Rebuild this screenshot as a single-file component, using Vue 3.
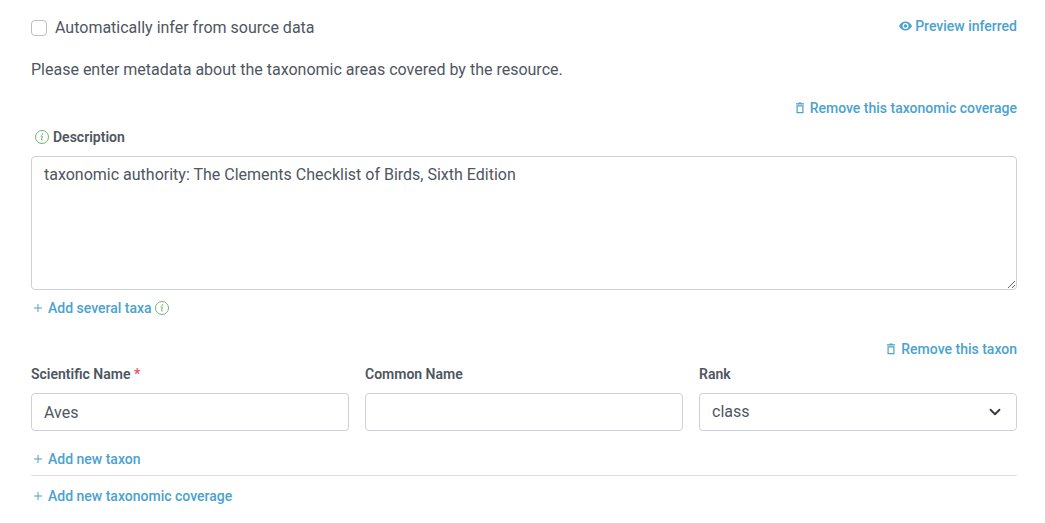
<script setup>
import { ref } from 'vue'

const infer = ref(false)
const description = ref('taxonomic authority: The Clements Checklist of Birds, Sixth Edition')
const scientificName = ref('Aves')
const commonName = ref('')
const rank = ref('class')
const ranks = ['kingdom', 'phylum', 'class', 'order', 'family', 'genus', 'species']
</script>

<template>
  <main class="page">
    <div class="top">
      <label class="check" for="infer">
        <input id="infer" v-model="infer" type="checkbox" />
        <span>Automatically infer from source data</span>
      </label>
      <a class="link" href="#preview">
        <svg class="eye" width="13" height="10" viewBox="0 0 13 10" aria-hidden="true">
          <path fill="currentColor" fill-rule="evenodd" d="M6.500.5C3.600.5 1.200 2.400 0 5c1.200 2.600 3.600 4.500 6.500 4.500S11.800 7.600 13 5C11.800 2.400 9.400.5 6.500.5zM6.500 8a3 3 0 1 1 0-6 3 3 0 0 1 0 6zM6.500 3.200a1.800 1.800 0 1 0 0 3.600 1.800 1.800 0 0 0 0-3.600z" />
        </svg>
        <span>Preview inferred</span>
      </a>
    </div>

    <p class="intro">Please enter metadata about the taxonomic areas covered by the resource.</p>

    <div class="actions">
      <a class="link" href="#remove-coverage">
        <svg class="trash" width="10" height="12" viewBox="0 0 10 12" aria-hidden="true">
          <path fill="currentColor" fill-rule="evenodd" d="M3.500.5h3v.7H9v1.200H1V1.200h2.500zM1.500 3.200h7v8h-7zM2.700 4.400v5.600h4.600V4.400z" />
        </svg>
        <span>Remove this taxonomic coverage</span>
      </a>
    </div>

    <div class="description">
      <div class="label-row">
        <button class="info" type="button" aria-label="Description help">
          <svg width="14" height="14" viewBox="0 0 14 14" aria-hidden="true">
            <circle cx="7" cy="7" r="6.500" fill="none" stroke="currentColor" stroke-width=".9" />
            <path fill="none" stroke="currentColor" stroke-width=".9" d="M5.600 6h1.700L6.500 9.700q-.1.700 1.200.2" />
            <circle cx="7.500" cy="4" r=".8" fill="currentColor" />
          </svg>
        </button>
        <label class="label" for="description">Description</label>
      </div>
      <textarea id="description" v-model="description" class="control area" spellcheck="false"></textarea>
    </div>

    <div class="add several">
      <a class="link" href="#add-several">
        <svg class="plus" width="10" height="10" viewBox="0 0 10 10" aria-hidden="true">
          <path fill="none" stroke="currentColor" d="M5 1v8M1 5h8" />
        </svg>
        <span>Add several taxa</span>
      </a>
      <button class="info" type="button" aria-label="Add several taxa help">
        <svg width="14" height="14" viewBox="0 0 14 14" aria-hidden="true">
          <circle cx="7" cy="7" r="6.500" fill="none" stroke="currentColor" stroke-width=".9" />
          <path fill="none" stroke="currentColor" stroke-width=".9" d="M5.600 6h1.700L6.500 9.700q-.1.700 1.200.2" />
          <circle cx="7.500" cy="4" r=".8" fill="currentColor" />
        </svg>
      </button>
    </div>

    <section class="taxon">
      <div class="actions">
        <a class="link" href="#remove-taxon">
          <svg class="trash" width="10" height="12" viewBox="0 0 10 12" aria-hidden="true">
            <path fill="currentColor" fill-rule="evenodd" d="M3.500.5h3v.7H9v1.200H1V1.200h2.500zM1.500 3.200h7v8h-7zM2.700 4.400v5.600h4.600V4.400z" />
          </svg>
          <span>Remove this taxon</span>
        </a>
      </div>
      <div class="fields">
        <div class="field">
          <label class="label" for="scientific">Scientific Name <span class="required">*</span></label>
          <input id="scientific" v-model="scientificName" class="control" type="text" />
        </div>
        <div class="field">
          <label class="label" for="common">Common Name</label>
          <input id="common" v-model="commonName" class="control" type="text" />
        </div>
        <div class="field">
          <label class="label" for="rank">Rank</label>
          <div class="select-box">
            <select id="rank" v-model="rank" class="control">
              <option v-for="name in ranks" :key="name" :value="name">{{ name }}</option>
            </select>
            <svg class="chevron" width="12" height="12" viewBox="0 0 16 16" aria-hidden="true">
              <path fill="none" stroke="currentColor" stroke-width="2.400" stroke-linecap="round" stroke-linejoin="round" d="M2 5l6 6 6-6" />
            </svg>
          </div>
        </div>
      </div>
      <div class="add">
        <a class="link" href="#add-taxon">
          <svg class="plus" width="10" height="10" viewBox="0 0 10 10" aria-hidden="true">
            <path fill="none" stroke="currentColor" d="M5 1v8M1 5h8" />
          </svg>
          <span>Add new taxon</span>
        </a>
      </div>
    </section>

    <div class="add coverage">
      <a class="link" href="#add-coverage">
        <svg class="plus" width="10" height="10" viewBox="0 0 10 10" aria-hidden="true">
          <path fill="none" stroke="currentColor" d="M5 1v8M1 5h8" />
        </svg>
        <span>Add new taxonomic coverage</span>
      </a>
    </div>
  </main>
</template>

<style>
body {
  background: #fff;
}
</style>

<style scoped>
.page {
  padding: 16px 28px 16px 31px;
  color: #4e565f;
  font: 400 16px/24px Roboto, sans-serif;
}

.top {
  display: flex;
  justify-content: space-between;
  align-items: flex-start;
}

.check {
  display: flex;
  align-items: center;
  gap: 8px;
}

.check input {
  appearance: none;
  width: 16px;
  height: 16px;
  margin: 0;
  border: 1px solid #bfbfbf;
  border-radius: 4px;
  background: #fff;
}

.check input:checked {
  background: #4ba2ce;
}

.link {
  display: inline-flex;
  align-items: center;
  color: #4ba2ce;
  font-size: 14px;
  font-weight: 500;
  line-height: 20px;
  text-decoration: none;
}

.eye {
  margin-right: 3px;
}

.trash {
  margin-right: 5px;
}

.plus {
  margin-right: 5px;
}

.intro {
  margin: 18px 0 16px;
}

.actions {
  display: flex;
  justify-content: flex-end;
}

.description {
  margin-top: 9px;
}

.label-row {
  display: flex;
  align-items: center;
  gap: 4px;
  padding-left: 4px;
}

.label {
  display: block;
  font-size: 14px;
  font-weight: 600;
  line-height: 20px;
}

.required {
  color: #e3566a;
}

.info {
  display: flex;
  padding: 0;
  border: 0;
  background: none;
  color: #5fad62;
}

.control {
  display: block;
  box-sizing: border-box;
  width: 100%;
  height: 38px;
  margin: 9px 0 0;
  padding: 6px 12px;
  border: 1px solid #cdd0d8;
  border-radius: 4px;
  background: #fff;
  color: inherit;
  font: inherit;
  appearance: none;
}

.area {
  height: 134px;
  resize: vertical;
}

.add {
  display: flex;
  align-items: center;
  gap: 3px;
  padding-left: 2px;
}

.several {
  margin-top: 8px;
}

.taxon {
  margin-top: 21px;
  padding-bottom: 6px;
  border-bottom: 1px solid #dcdee0;
}

.fields {
  display: grid;
  grid-template-columns: repeat(3, minmax(0, 1fr));
  gap: 16px;
  margin: 5px 0 18px;
}

.select-box {
  position: relative;
}

.chevron {
  position: absolute;
  right: 16px;
  top: 13px;
  color: #343a40;
  pointer-events: none;
}

.coverage {
  margin-top: 10px;
}
</style>
